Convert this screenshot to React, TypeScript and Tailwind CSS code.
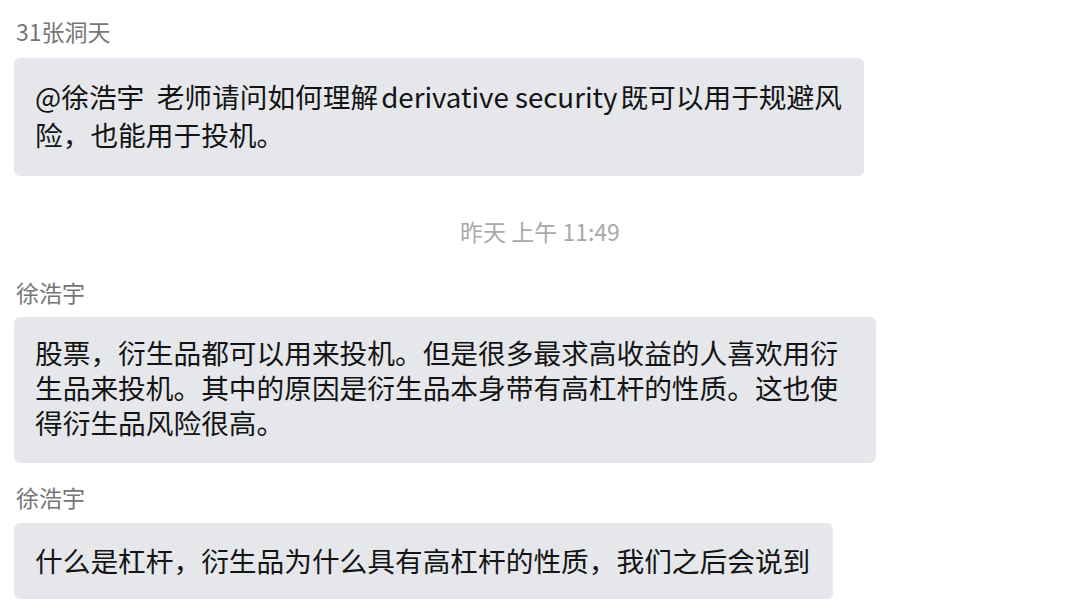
const font = {
  fontFamily: '"Noto Sans CJK SC", "Noto Sans", sans-serif',
};

function Name({ children }: { children: React.ReactNode }) {
  return (
    <div className="h-[30px] pl-[16px] text-[23px] leading-[30px] text-[#767676]">
      {children}
    </div>
  );
}

function Bubble({
  lines,
  width,
  lineHeight,
  pad,
}: {
  lines: React.ReactNode[];
  width: string;
  lineHeight: string;
  pad: string;
}) {
  return (
    <div className={`ml-[14px] mt-[10px] rounded-[6px] bg-[#e5e7ea] pl-[21px] ${width} ${pad}`}>
      {lines.map((line, i) => (
        <div key={i} className={`whitespace-pre text-[27.7px] text-[#141414] ${lineHeight}`}>
          {line}
        </div>
      ))}
    </div>
  );
}

export default function App() {
  return (
    <div className="h-[612px] w-[1080px] overflow-hidden bg-white pt-[16px]" style={font}>
      {/* 第一条消息 */}
      <Name>31张洞天</Name>
      <div className="h-[2px]" />
      <Bubble
        width="w-[850px]"
        lineHeight="leading-[38px]"
        pad="pt-[19px] pb-[23px]"
        lines={[
          <>
            @徐浩宇  老师请问如何理解
            <span className="mx-[3px]">derivative security</span>
            既可以用于规避风
          </>,
          "险，也能用于投机。",
        ]}
      />

      {/* 时间 */}
      <div className="mt-[40px] h-[30px] text-center text-[23px] leading-[30px] text-[#a9a9a9]">
        昨天 上午 11:49
      </div>

      <div className="mt-[31px]">
        <Name>徐浩宇</Name>
      </div>
      <Bubble
        width="w-[862px]"
        lineHeight="leading-[35px]"
        pad="pt-[18px] pb-[23px]"
        lines={[
          "股票，衍生品都可以用来投机。但是很多最求高收益的人喜欢用衍",
          "生品来投机。其中的原因是衍生品本身带有高杠杆的性质。这也使",
          "得衍生品风险很高。",
        ]}
      />

      <div className="mt-[19px]">
        <Name>徐浩宇</Name>
      </div>
      <div className="h-[1px]" />
      <Bubble
        width="w-[819px]"
        lineHeight="leading-[36px]"
        pad="pt-[19px] pb-[21px]"
        lines={["什么是杠杆，衍生品为什么具有高杠杆的性质，我们之后会说到"]}
      />
    </div>
  );
}
